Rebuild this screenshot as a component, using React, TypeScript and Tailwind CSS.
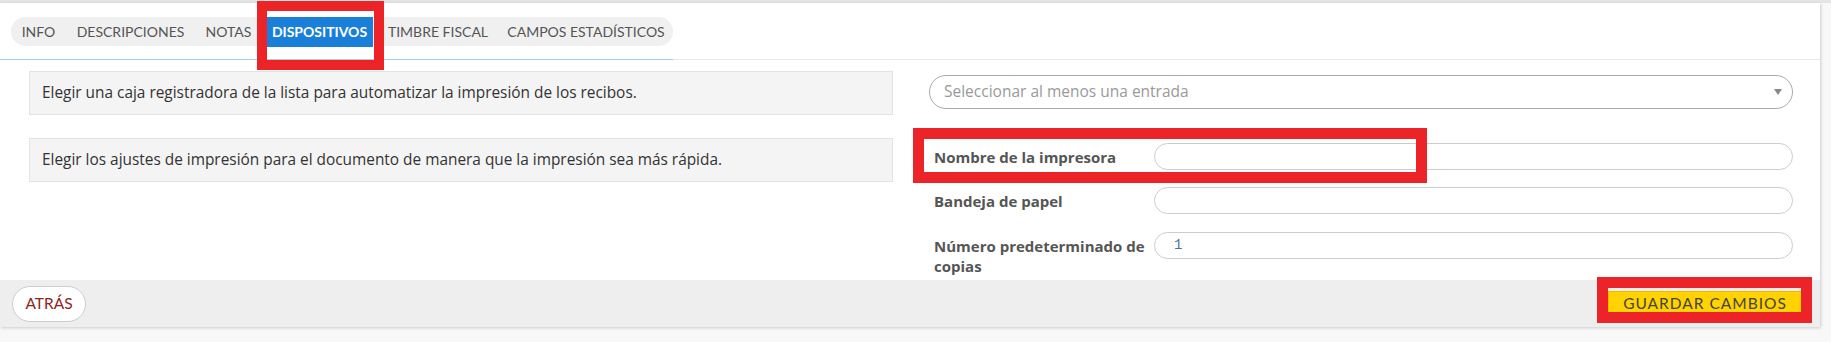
import React from "react";

const tabs = [
  { label: "INFO", w: "w-[47px]" },
  { label: "DESCRIPCIONES", w: "w-[121px]" },
  { label: "NOTAS", w: "w-[59px]" },
  { label: "DISPOSITIVOS", w: "w-[107px]", active: true },
  { label: "TIMBRE FISCAL", w: "w-[114px]" },
  { label: "CAMPOS ESTADÍSTICOS", w: "w-[166px]" },
];

function Field({ label, value, className = "" }: { label: string; value?: string; className?: string }) {
  return (
    <div className={`flex items-start pl-[5px] ${className}`}>
      <div className="w-[220px] shrink-0 pt-[4px] pr-[4px] text-[15px] leading-[20px] font-bold text-[#555555] [font-family:'Open_Sans',sans-serif]">
        {label}
      </div>
      <div className="flex-1 h-[27px] rounded-full border border-[#cccccc] bg-white flex items-center pl-[19px] text-[14px] text-[#4f6f9a] [font-family:'Liberation_Mono',monospace]">
        {value}
      </div>
    </div>
  );
}

export default function App() {
  return (
    <div className="min-h-screen bg-[#f8f8f8] [font-family:Lato,'Open_Sans',sans-serif]">
      <div className="h-[3px] bg-[#e4e4e4]" />
      <div className="relative w-[1820px] bg-white shadow-[1px_1px_3px_rgba(0,0,0,0.18)]">
        {/* tabs */}
        <div className="pt-[14px] pl-[11px] pb-[13px]">
          <div className="inline-flex items-center gap-[8px] h-[29px] px-[4px] rounded-full bg-[#f0f0f0]">
            {tabs.map((t) => (
              <div
                key={t.label}
                className={`${t.w} h-[30px] flex items-center justify-center text-[14px] whitespace-nowrap ${
                  t.active ? "bg-[#1a7fd9] text-white font-bold" : "text-[#555555]"
                }`}
              >
                {t.label}
              </div>
            ))}
          </div>
        </div>
        <div className="flex h-px">
          <div className="w-[673px] bg-[#a9cdef]" />
          <div className="flex-1 bg-[#e8e8e8]" />
        </div>

        {/* content */}
        <div className="grid grid-cols-2 gap-x-[36px] pl-[29px] pr-[27px] pt-[11px] pb-[4px] [font-family:'Open_Sans',sans-serif]">
          <div className="flex flex-col gap-[23px]">
            <div className="h-[44px] flex items-center px-[12px] bg-[#f4f4f4] border border-[#e2e2e2] text-[15.4px] text-[#333333]">
              Elegir una caja registradora de la lista para automatizar la impresión de los recibos.
            </div>
            <div className="h-[44px] flex items-center px-[12px] bg-[#f4f4f4] border border-[#e2e2e2] text-[15.4px] text-[#333333]">
              Elegir los ajustes de impresión para el documento de manera que la impresión sea más rápida.
            </div>
          </div>
          <div className="flex flex-col">
            <div className="mt-[4px] h-[34px] rounded-full border border-[#aaaaaa] bg-white flex items-center justify-between pl-[14px] pr-[10px]">
              <span className="text-[15.5px] text-[#999999]">Seleccionar al menos una entrada</span>
              <svg width="8" height="6" viewBox="0 0 8 6">
                <path d="M0 0 L8 0 L4 6 Z" fill="#888888" />
              </svg>
            </div>
            <Field label="Nombre de la impresora" className="mt-[34px]" />
            <Field label="Bandeja de papel" className="mt-[17px]" />
            <Field label="Número predeterminado de copias" value="1" className="mt-[18px]" />
          </div>
        </div>

        {/* footer */}
        <div className="h-[47px] bg-[#eeeeee] flex items-center justify-between pl-[12px] pr-[18px]">
          <button className="h-[36px] w-[74px] rounded-full border border-[#cccccc] bg-white text-[15.5px] text-[#8e2323]">
            ATRÁS
          </button>
          <button className="h-[25px] w-[194px] bg-[#ffd200] border border-[#f2b800] text-[15.5px] tracking-[1px] text-[#444444]">
            GUARDAR CAMBIOS
          </button>
        </div>

        {/* annotation frames */}
        <div className="absolute left-[257px] top-[-2px] w-[127px] h-[69px] border-[10px] border-[#ec2327] pointer-events-none" />
        <div className="absolute left-[913px] top-[125px] w-[514px] h-[55px] border-[11px] border-[#ec2327] pointer-events-none" />
        <div className="absolute left-[1597px] top-[274px] w-[215px] h-[46px] border-[11px] border-[#ec2327] pointer-events-none" />
      </div>
    </div>
  );
}
